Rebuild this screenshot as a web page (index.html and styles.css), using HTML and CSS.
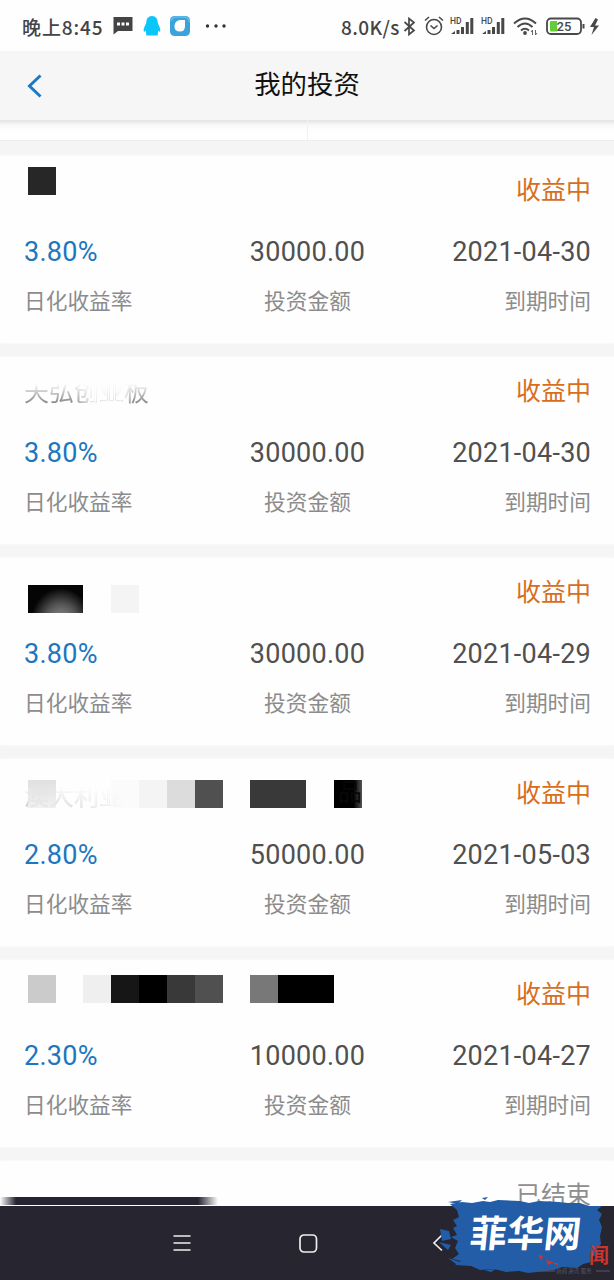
FILE: index.html
```html
<!DOCTYPE html>
<html lang="zh-CN">
<head>
    <meta charset="UTF-8">
    <meta name="viewport" content="width=device-width, initial-scale=1.0">
    <title>我的投资</title>
    <link rel="stylesheet" href="styles.css">
</head>
<body>
    <div class="phone">
        <div class="status-bar">
            <div class="status-left">
                <span class="clock">晚上8:45</span>
                <svg class="icon-chat" width="20" height="18" viewBox="0 0 20 18"><path d="M.5 0h19v14H5l-4.500 3.500z" fill="#444"/><path d="M4 5.500h3v3H4zM8.500 5.500h3v3h-3zM13 5.500h3v3h-3z" fill="#fff"/></svg>
                <svg class="icon-qq" width="18" height="20" viewBox="0 0 18 20"><path d="M9 0C5 0 3.300 3 3.300 6.500 3 8.500 0 12 .8 15.500c.4.800 1.300-.3 2-1 .1 2 .4 3.200.6 5h11.200c.2-1.800.5-3 .6-5 .7.700 1.600 1.800 2 1 .8-3.500-2.200-7-2.500-9C14.700 3 13 0 9 0z" fill="#0cc6fa"/></svg>
                <svg class="icon-app" width="20" height="20" viewBox="0 0 20 20"><rect width="20" height="20" rx="4.500" fill="#3ba3dc"/><path d="M1 5Q2 1 6 1h8q5 0 5 5" fill="none" stroke="#63bdea" stroke-width="1.500"/><path d="M10 4h5v6q0 5.500-5 5.500-5.500 0-5.500-5.200Q4.500 5 10 4z" fill="#fff"/></svg>
                <svg width="22" height="4" viewBox="0 0 22 4"><g fill="#333"><circle cx="2.500" cy="2" r="1.700"/><circle cx="11" cy="2" r="1.700"/><circle cx="19" cy="2" r="1.700"/></g></svg>
            </div>
            <div class="status-right">
                <span class="speed">8.0K/s</span>
                <svg class="icon-bt" width="13" height="19" viewBox="0 0 13 19"><path d="M1.500 5l9.500 8.500-5 4v-16l5 4L1.500 14" fill="none" stroke="#484848" stroke-width="1.700"/></svg>
                <svg class="icon-alarm" width="20" height="20" viewBox="0 0 20 20"><g fill="none" stroke="#484848" stroke-width="1.600"><circle cx="10" cy="11" r="7.500"/><path d="M1 4.500L5 1M19 4.500L15 1M6.500 9.500l3.500 3 3.500-3"/></g></svg>
                <svg class="icon-signal" width="25" height="18" viewBox="0 0 25 18"><path d="M1 17l4-3v3zM6.500 13h3v4h-3zM11 10h3v7h-3zM15.800 5h3v12h-3zM20.300 1h3v16h-3z" fill="#484848"/><text x="0" y="7" class="hd">HD</text></svg>
                <svg class="icon-signal" width="25" height="18" viewBox="0 0 25 18"><path d="M1 17l4-3v3zM6.500 13h3v4h-3zM11 10h3v7h-3zM15.800 5h3v12h-3zM20.300 1h3v16h-3z" fill="#484848"/><text x="0" y="7" class="hd">HD</text></svg>
                <svg class="icon-wifi" width="25" height="19" viewBox="0 0 25 19"><g fill="none" stroke="#484848" stroke-width="2"><path d="M1 6.500q11-10 22 0M4.500 10q7.500-7 15 0M8 13.500q4-3.500 8 0"/></g><circle cx="12" cy="16" r="1.900" fill="#484848"/><path d="M19.500 18v-5l-1.500 2M22.500 13v5l1.500-2" fill="none" stroke="#666"/></svg>
                <svg width="54" height="19" viewBox="0 0 54 19"><rect x="1" y="1.500" width="34" height="15.500" rx="4" fill="#fff" stroke="#484848" stroke-width="1.800"/><path d="M5 4h6v10.500H5q-1 0-1-1V5q0-1 1-1z" fill="#65cc3a"/><path d="M37.500 7v4.500" stroke="#484848" stroke-width="2"/><text x="10.500" y="14" class="battery">25</text><path d="M49.500 1L44 10h4l-2.500 8 7.500-9.500h-4l3-6z" fill="#484848"/></svg>
            </div>
        </div>

        <div class="title-bar">
            <svg class="back" width="15" height="24" viewBox="0 0 15 24"><path d="M13.500 1.500L2.500 12l11 10.500" fill="none" stroke="#1f78c4" stroke-width="3"/></svg>
            <h1>我的投资</h1>
        </div>
        <div class="tabs"><div></div><div></div></div>

        <div class="list">
            <div class="card">
                <div class="mosaic row-a"><i class="c26"></i></div>
                <div class="card-head"><span class="name"></span><span class="state">收益中</span></div>
                <div class="values"><span class="rate">3.80%</span><span>30000.00</span><span>2021-04-30</span></div>
                <div class="labels"><span>日化收益率</span><span>投资金额</span><span>到期时间</span></div>
            </div>

            <div class="card">
                <div class="card-head"><span class="name faded">天弘创业板</span><span class="state">收益中</span></div>
                <div class="values"><span class="rate">3.80%</span><span>30000.00</span><span>2021-04-30</span></div>
                <div class="labels"><span>日化收益率</span><span>投资金额</span><span>到期时间</span></div>
            </div>

            <div class="card">
                <div class="mosaic row-b"><i class="shade"></i><i></i><i class="cf4"></i></div>
                <div class="card-head"><span class="name"></span><span class="state">收益中</span></div>
                <div class="values"><span class="rate">3.80%</span><span>30000.00</span><span>2021-04-29</span></div>
                <div class="labels"><span>日化收益率</span><span>投资金额</span><span>到期时间</span></div>
            </div>

            <div class="card">
                <div class="mosaic row-c"><i class="ce0"></i><i></i><i></i><i class="cf8"></i><i class="cf4"></i><i class="cdc"></i><i class="c50"></i><i></i><i class="c3a"></i><i class="c3a"></i><i></i><i class="edge">品</i></div>
                <div class="card-head"><span class="name pale">澳大利亚</span><span class="state">收益中</span></div>
                <div class="values"><span class="rate">2.80%</span><span>50000.00</span><span>2021-05-03</span></div>
                <div class="labels"><span>日化收益率</span><span>投资金额</span><span>到期时间</span></div>
            </div>

            <div class="card">
                <div class="mosaic row-d"><i class="ccc"></i><i></i><i class="cee"></i><i class="c16"></i><i class="c00"></i><i class="c3a"></i><i class="c50"></i><i></i><i class="c78"></i><i class="c00"></i><i class="c00"></i></div>
                <div class="card-head"><span class="name"></span><span class="state">收益中</span></div>
                <div class="values"><span class="rate">2.30%</span><span>10000.00</span><span>2021-04-27</span></div>
                <div class="labels"><span>日化收益率</span><span>投资金额</span><span>到期时间</span></div>
            </div>

            <div class="card last">
                <div class="card-head"><span class="name"></span><span class="state done">已结束</span></div>
                <div class="smear"></div>
            </div>
        </div>

        <div class="nav-bar">
            <svg width="18" height="18" viewBox="0 0 18 18"><path d="M.5 2h17M.5 9h17M.5 16h17" stroke="#eee" stroke-width="1.700"/></svg>
            <svg width="19" height="19" viewBox="0 0 19 19"><rect x="1" y="1" width="16.500" height="17" rx="4" fill="none" stroke="#eee" stroke-width="1.700"/></svg>
            <svg width="12" height="18" viewBox="0 0 12 18"><path d="M10 1L2 9l8 7.500" fill="none" stroke="#eee" stroke-width="1.700"/></svg>
        </div>

        <div class="watermark">
            <span class="source">闻</span>
            <svg width="178" height="84" viewBox="0 0 178 84">
                <path d="M14 8L26 6l10 1 11-2 7 1 8-2 22 1 9 2 10-2 20 1 9 1 12 0 9 3 13 0-5 4 5 4-3 6 3 7-2 9 1 8-4 5 1 5-7 3 1 5-9 2-6 4-15-1-8 3-26 3-9-2-13 1-12-3-14 1-9-4-16-1 6-4-9-2 7-5-4-6 3-7-7-4 6-2-4-7 4-2-4-6 6-3-2-7z" fill="#235da7"/>
                <path d="M4 33l9 2 2 8-9 2zM3 46l12 3-3 5zM12 62l12 4 11-1-4 4-11-1zM48 74l12-1-5 3zM12 6l14-2-4 4zM46 2l6-1-3 3zM132 69l12-4-4 5zM76 71l9 2-5 2z" fill="#235da7"/>
                <path d="M102 59l5 1-2 4zM110 64l8 2-6 3zM117 67h5v3z" fill="#c93630"/>
                <path d="M103 75h16M160 75h14" stroke="#595866"/>
            </svg>
            <span class="brand">菲华网</span>
            <span class="slogan">新闻 资讯 服务</span>
        </div>
    </div>
</body>
</html>
```

FILE: styles.css
```css
body {
    margin: 0;
    background: #fff;
    font-family: Roboto, "Noto Sans CJK SC", sans-serif;
    color: #505050;
}

.phone {
    position: relative;
    display: flex;
    flex-direction: column;
    height: 1280px;
    overflow: hidden;
}

svg {
    display: block;
    flex: none;
}

/* status bar */
.status-bar {
    display: flex;
    justify-content: space-between;
    height: 51px;
    box-sizing: border-box;
    padding: 0 14px 0 22px;
    background: #fefefe;
}

.status-left,
.status-right {
    display: flex;
    align-items: center;
    height: 52px;
    font-family: "Noto Sans CJK SC", sans-serif;
    font-weight: 500;
    color: #444;
    white-space: nowrap;
}

.clock {
    width: 91px;
    font-size: 19px;
    letter-spacing: 0.9px;
}

.icon-chat { margin-right: 10px; }
.icon-qq { margin-right: 9px; }
.icon-app { margin-right: 15px; }

.speed {
    width: 62px;
    font-size: 19px;
    letter-spacing: 0.4px;
}

.icon-bt { margin-right: 8px; }
.icon-alarm { margin-right: 6px; }
.icon-signal { margin-right: 6px; }
.icon-wifi { margin: 0 8px 0 1px; }

.hd {
    font: 500 8.5px Roboto, sans-serif;
    fill: #484848;
}

.battery {
    font: 500 13px Roboto, sans-serif;
    fill: #484848;
}

/* title */
.title-bar {
    position: relative;
    display: flex;
    align-items: center;
    justify-content: center;
    height: 69px;
    background: #f6f6f6;
}

.back {
    position: absolute;
    left: 27px;
    top: 23px;
}

h1 {
    margin: 0;
    font-size: 26.4px;
    font-weight: 400;
    line-height: 67px;
    color: #111;
}

.tabs {
    display: flex;
    height: 21px;
    box-sizing: border-box;
    padding: 0 2px;
    border-bottom: 1px solid #eee;
    background: linear-gradient(#e2e2e2, #f8f8f8 5px, #fefefe 10px);
}

.tabs div {
    flex: 1;
}

.tabs div + div {
    border-left: 1px solid #f0f0f0;
}

/* investments */
.list {
    flex: 1;
    overflow: hidden;
    padding-top: 15px;
    background: #f5f5f5;
}

.card {
    position: relative;
    height: 187px;
    margin-bottom: 14px;
    box-sizing: border-box;
    padding: 16px 23px 0 24px;
    background: #fefefe;
    box-shadow: 0 0 3px #fefefe;
}

.card-head {
    display: flex;
    justify-content: space-between;
    height: 38px;
    line-height: 38px;
    font-size: 25px;
}

.state {
    color: #d86e1c;
}

.done {
    color: #8e8e8e;
}

.values,
.labels {
    display: grid;
    grid-template-columns: 1fr 1fr 1fr;
    text-align: center;
}

.values {
    height: 48px;
    margin-top: 18px;
    line-height: 48px;
    font-size: 27px;
    letter-spacing: 0.25px;
}

.labels {
    height: 40px;
    margin-top: 6px;
    line-height: 40px;
    font-size: 21.7px;
    color: #8c8c8c;
}

.values span:first-child,
.labels span:first-child {
    text-align: left;
}

.values span:last-child,
.labels span:last-child {
    text-align: right;
}

.rate {
    color: #1c76c0;
}

/* hidden product names */
.faded {
    padding-top: 1px;
    color: transparent;
    background: linear-gradient(90deg, #fefefe00 40%, #fefefe 55%, #fefefe 80%, #fefefe00 86%), linear-gradient(#fefefe 28%, #777 85%);
    -webkit-background-clip: text;
    background-clip: text;
}

.pale {
    padding-top: 3px;
    color: transparent;
    background: linear-gradient(90deg, #fefefe40, #fefefe), linear-gradient(#fefefe 30%, #bbb 85%);
    -webkit-background-clip: text;
    background-clip: text;
}

.mosaic {
    position: absolute;
    left: 27.7px;
    display: flex;
}

.mosaic i {
    width: 27.85px;
    height: 28px;
}

.row-a { top: 11px; }
.row-b { top: 27px; }
.row-c { top: 21px; }
.row-d { top: 15px; }

.c00 { background: #000; }
.c16 { background: #161616; }
.c26 { background: #272727; }
.c3a { background: #393939; }
.c50 { background: #505050; }
.c78 { background: #787878; }
.ccc { background: #cbcbcb; }
.cdc { background: #dcdcdc; }
.ce0 { background: linear-gradient(#dededeee, #ecececbb); }
.cee { background: #efefef; }
.cf4 { background: #f2f2f2dd; }
.cf8 { background: #f9f9f9aa; }

.mosaic .shade {
    width: 55.7px;
    background: radial-gradient(ellipse at 60% 135%, #999, #555 35%, #050505 65%);
}

.mosaic .edge {
    background: linear-gradient(90deg, #000 70%, #555);
    font-size: 24px;
    font-style: normal;
    line-height: 26px;
    text-align: right;
    color: #080808;
}

.last {
    margin-bottom: 0;
}

.smear {
    position: absolute;
    left: 0;
    top: 36px;
    width: 218px;
    height: 8px;
    background: linear-gradient(90deg, #fefefe, #262433 16px, #262433 198px, #fefefe);
}

/* system navigation */
.nav-bar {
    display: flex;
    align-items: center;
    height: 74px;
    box-sizing: border-box;
    padding-left: 173px;
    gap: 108px;
    background: #262530;
}

.nav-bar svg:last-child {
    margin-left: 6px;
}

.watermark {
    position: absolute;
    left: 436px;
    top: 1196px;
    width: 178px;
    height: 84px;
}

.brand {
    position: absolute;
    left: 34px;
    top: 17px;
    font-size: 37px;
    font-weight: 700;
    line-height: 44px;
    color: #fff;
    transform: skewX(-6deg);
}

.source {
    position: absolute;
    right: 5px;
    top: 48px;
    font-size: 20px;
    font-weight: 700;
    line-height: 24px;
    color: #c93630;
}

.slogan {
    position: absolute;
    left: 120px;
    top: 72px;
    font-size: 5.5px;
    line-height: 6px;
    color: #595866;
    white-space: nowrap;
}
```
